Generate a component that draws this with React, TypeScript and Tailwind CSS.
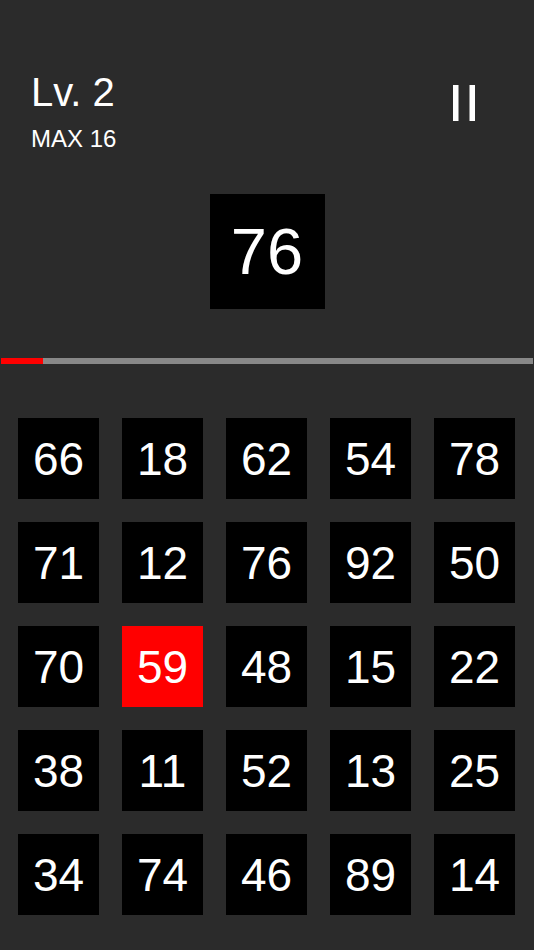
const GRID = [
  [66, 18, 62, 54, 78],
  [71, 12, 76, 92, 50],
  [70, 59, 48, 15, 22],
  [38, 11, 52, 13, 25],
  [34, 74, 46, 89, 14],
];

const HIGHLIGHT = 59;

export default function App() {
  return (
    <div
      className="w-full h-[950px] bg-[#2b2b2b] text-white flex flex-col overflow-hidden"
      style={{ fontFamily: '"Liberation Sans", Arial, sans-serif' }}
    >
      {/* Header */}
      <div className="flex justify-between items-start pt-[72px] pl-[31px] pr-[59px]">
        <div className="flex flex-col">
          <span className="text-[40px] leading-none">Lv. 2</span>
          <span className="text-[24px] leading-none mt-[15px]">MAX 16</span>
        </div>
        <svg width="22" height="36" viewBox="0 0 22 36" className="mt-[13px]">
          <rect x="0" y="0" width="5.5" height="36" fill="#fff" />
          <rect x="16.5" y="0" width="5.5" height="36" fill="#fff" />
        </svg>
      </div>

      {/* Target number */}
      <div className="mt-[43px] mx-auto w-[115px] h-[115px] bg-black flex items-center justify-center">
        <span className="text-[65px] leading-none">76</span>
      </div>

      {/* Timer bar */}
      <div className="mt-[49px] mx-[1px] h-[6px] bg-[#888888] flex">
        <div className="w-[42px] h-full bg-[#ff0000]" />
      </div>

      {/* Number grid */}
      <div className="mt-[54px] px-[18px] grid grid-cols-[repeat(5,81px)] gap-[23px]">
        {GRID.flat().map((n, i) => (
          <div
            key={i}
            className={`h-[81px] flex items-center justify-center ${
              n === HIGHLIGHT ? 'bg-[#ff0000]' : 'bg-black'
            }`}
          >
            <span className="text-[46px] leading-none">{n}</span>
          </div>
        ))}
      </div>
    </div>
  );
}
